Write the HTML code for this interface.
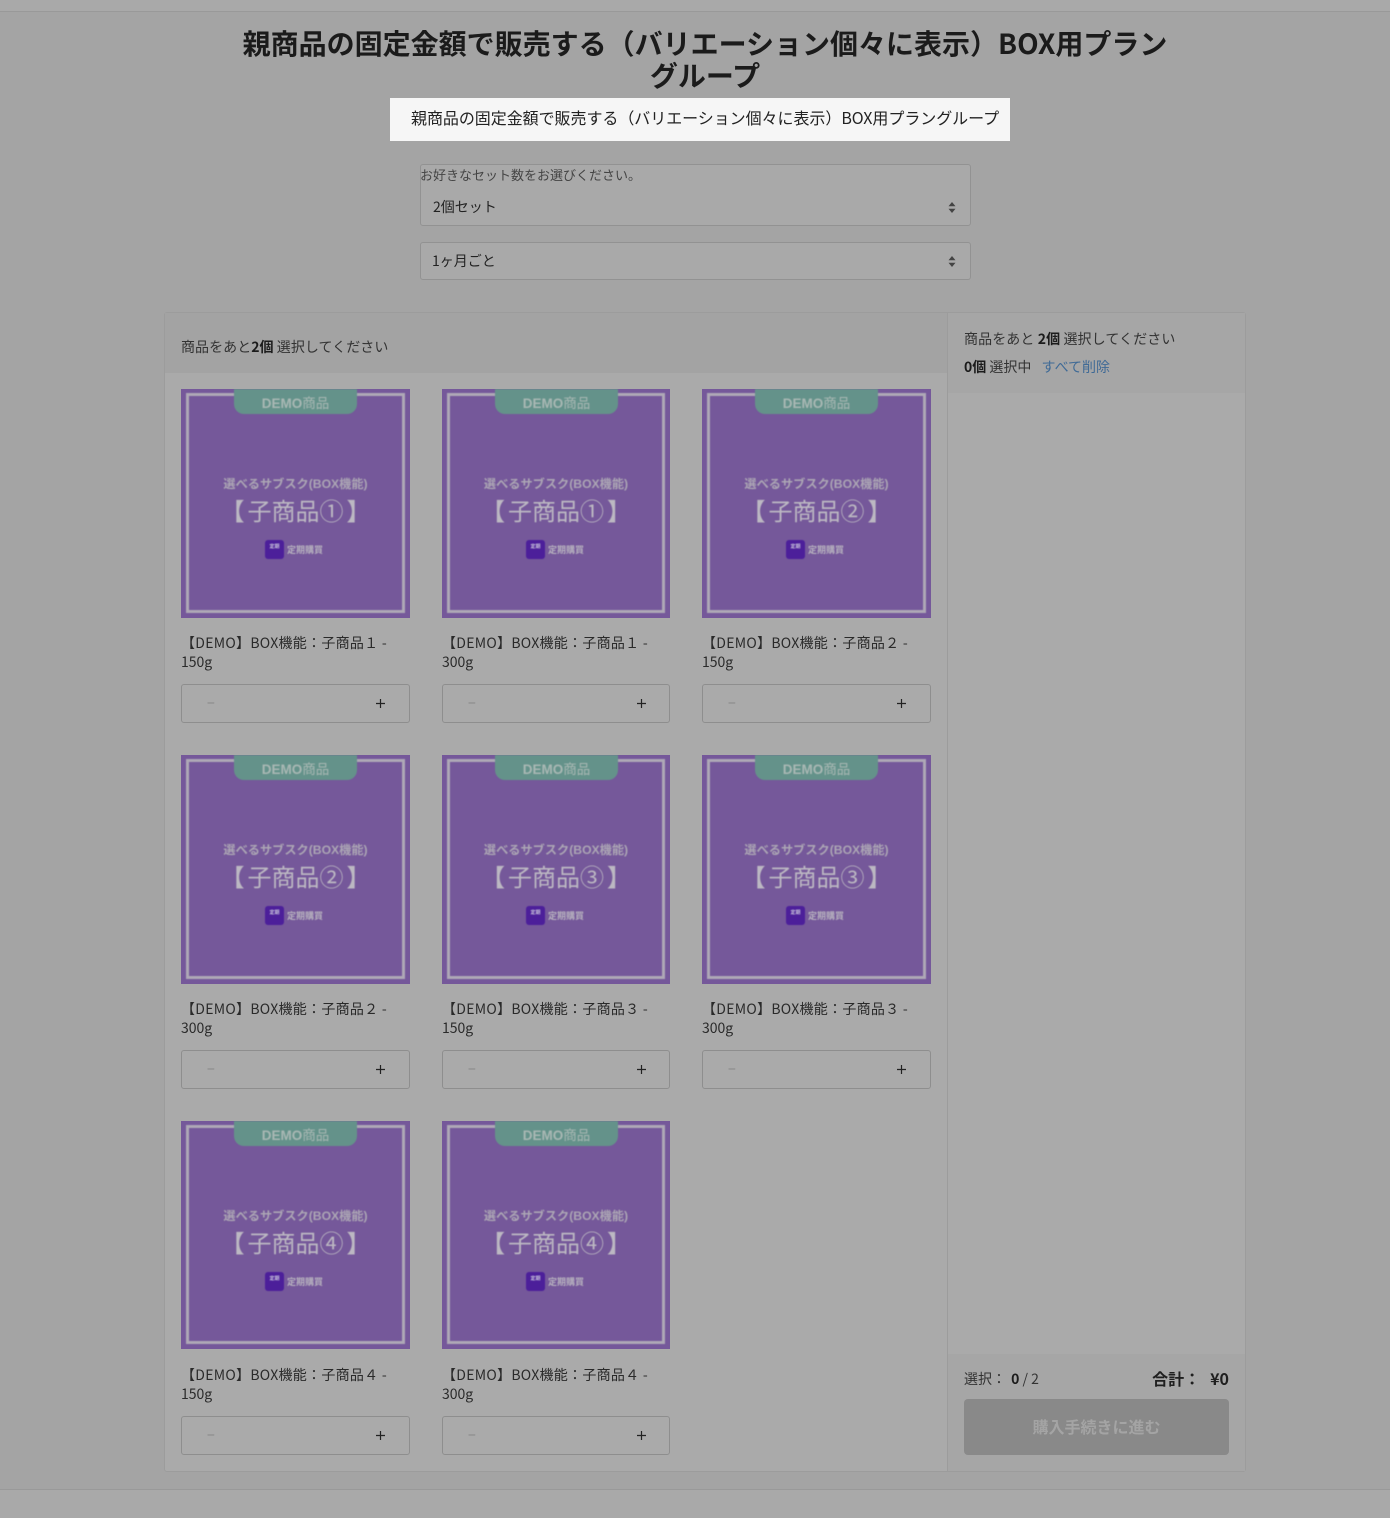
<!DOCTYPE html>
<html lang="ja"><head><meta charset="utf-8"><title>BOX</title>
<style>
*{box-sizing:border-box}
html,body{margin:0;padding:0}
body{width:1390px;height:1518px;position:relative;overflow:hidden;background:#a4a4a4;font-family:"Noto Sans CJK JP","Liberation Sans",sans-serif;color:#222;font-size:14px}
.a{position:absolute;white-space:nowrap}
.card{position:absolute;width:229px;height:334px}
.img{position:absolute;left:0;top:0;width:100%;height:229px;background:#75589a;overflow:hidden;font-family:"Liberation Sans","Noto Sans CJK JP",sans-serif}
.in{position:absolute;inset:0;filter:blur(.45px)}
.fr{position:absolute;left:5px;right:5px;top:4px;bottom:5px;border:3px solid #aea8b6}
.tag{position:absolute;left:53px;width:123px;top:0;height:25px;background:#64928a;border-radius:0 0 10px 10px;color:#a9b8b4;font-size:13.5px;font-weight:bold;text-align:center;line-height:29px}
.tag span{font-weight:normal}
.l1{position:absolute;left:0;right:0;top:87px;text-align:center;font-size:12.2px;font-weight:bold;color:#aca6b4;line-height:16px}
.l2{position:absolute;left:0;right:0;top:107px;text-align:center;font-size:24px;color:#bcb8c2;line-height:34px;white-space:nowrap}
.l2 b{margin:0 3px}
.ic{position:absolute;left:84px;top:151px;width:19px;height:19px;background:#4c1f9a;border-radius:3px;color:#c9c4dc;font-size:5px;text-align:center;line-height:15px;font-weight:bold;overflow:hidden;white-space:nowrap}
.l3{position:absolute;left:106px;top:154px;font-size:9px;font-weight:bold;color:#b8b3bf;line-height:15px;white-space:nowrap}
.nm{position:absolute;left:0;top:245px;width:100%;font-size:14px;line-height:19px;color:#2a2a2a}
.nm::first-line{letter-spacing:.28px}
.qty{position:absolute;left:0;right:0;top:295px;height:39px;border:1px solid #8e8e8e;border-radius:3px}
.qty .m{position:absolute;left:25px;top:9px;font-size:14px;color:#858585;line-height:18px}
.qty svg{position:absolute;left:193px;top:12.5px}
.sel{position:absolute;left:420px;width:551px;border:1px solid #929292;border-radius:3px;background:#a9a9a9}
.arr{position:absolute;left:948px;width:8px;height:11px}
</style></head>
<body>
<div class="a" style="left:0;top:0;width:1390px;height:12px;background:#a9a9a9;border-bottom:1px solid #999"></div>
<div class="a" style="left:0;top:1489px;width:1390px;height:29px;background:#a9a9a9;border-top:1px solid #999"></div>

<div class="a" style="left:225px;top:27px;width:960px;text-align:center;font-size:28px;line-height:32px;font-weight:bold;color:#1b1b1b">親商品の固定金額で販売する（バリエーション個々に表示）BOX用プラン<br>グループ</div>
<div class="a" style="left:390px;top:98px;width:620px;height:43px;background:#f6f6f6"></div>
<div class="a" style="left:411px;top:105px;font-size:16px;line-height:24px;color:#222;letter-spacing:-.05px">親商品の固定金額で販売する（バリエーション個々に表示）BOX用プラングループ</div>

<div class="sel" style="top:164px;height:62px"></div>
<div class="a" style="left:420px;top:166px;font-size:13px;line-height:18px;color:#444">お好きなセット数をお選びください。</div>
<div class="a" style="left:433px;top:197px;font-size:14px;line-height:20px;color:#222">2個セット</div>
<svg class="arr" style="top:202px" viewBox="0 0 8 11"><path d="M4 0 7.5 4.2H.5zM4 11 .5 6.8h7z" fill="#444"/></svg>
<div class="sel" style="top:242px;height:38px"></div>
<div class="a" style="left:432px;top:251px;font-size:14px;line-height:20px;color:#222">1ヶ月ごと</div>
<svg class="arr" style="top:256px" viewBox="0 0 8 11"><path d="M4 0 7.5 4.2H.5zM4 11 .5 6.8h7z" fill="#444"/></svg>

<div class="a" style="left:164px;top:312px;width:1082px;height:1160px;background:#aaa;border:1px solid #9c9c9c;border-radius:3px"></div>
<div class="a" style="left:165px;top:313px;width:782px;height:60px;background:#a3a3a3"></div>
<div class="a" style="left:947px;top:313px;width:1px;height:1158px;background:#9c9c9c"></div>
<div class="a" style="left:948px;top:313px;width:297px;height:80px;background:#a6a6a6"></div>
<div class="a" style="left:948px;top:1354px;width:297px;height:117px;background:#a6a6a6"></div>

<div class="a" style="left:181px;top:337px;font-size:14px;line-height:20px;color:#333;letter-spacing:.05px">商品をあと<b style="color:#1c1c1c">2個</b> 選択してください</div>
<div class="a" style="left:964px;top:329px;font-size:14px;line-height:20px;color:#333;letter-spacing:.1px">商品をあと <b style="color:#1c1c1c">2個</b> 選択してください</div>
<div class="a" style="left:964px;top:357px;font-size:14px;line-height:20px;color:#333"><b style="color:#1c1c1c">0個</b> 選択中 <span style="color:#3f6a96;margin-left:7px">すべて削除</span></div>

<div class="card" style="left:181px;top:389px"><div class="img"><div class="in"><div class="fr"></div><div class="tag">DEMO<span>商品</span></div><div class="l1">選べるサブスク(BOX機能)</div><div class="l2"><b>【</b>子商品①<b>】</b></div><div class="ic">定期</div><div class="l3">定期購買</div></div></div><div class="nm">【DEMO】BOX機能：子商品１ -<br>150g</div><div class="qty"><span class="m">−</span><svg width="11" height="11" viewBox="0 0 11 11"><path d="M5.5 1v9M1 5.5h9" stroke="#222" stroke-width="1.2"/></svg></div></div>

<div class="card" style="left:442px;top:389px;width:228px"><div class="img"><div class="in"><div class="fr"></div><div class="tag">DEMO<span>商品</span></div><div class="l1">選べるサブスク(BOX機能)</div><div class="l2"><b>【</b>子商品①<b>】</b></div><div class="ic">定期</div><div class="l3">定期購買</div></div></div><div class="nm">【DEMO】BOX機能：子商品１ -<br>300g</div><div class="qty"><span class="m">−</span><svg width="11" height="11" viewBox="0 0 11 11"><path d="M5.5 1v9M1 5.5h9" stroke="#222" stroke-width="1.2"/></svg></div></div>

<div class="card" style="left:702px;top:389px"><div class="img"><div class="in"><div class="fr"></div><div class="tag">DEMO<span>商品</span></div><div class="l1">選べるサブスク(BOX機能)</div><div class="l2"><b>【</b>子商品②<b>】</b></div><div class="ic">定期</div><div class="l3">定期購買</div></div></div><div class="nm">【DEMO】BOX機能：子商品２ -<br>150g</div><div class="qty"><span class="m">−</span><svg width="11" height="11" viewBox="0 0 11 11"><path d="M5.5 1v9M1 5.5h9" stroke="#222" stroke-width="1.2"/></svg></div></div>

<div class="card" style="left:181px;top:755px"><div class="img"><div class="in"><div class="fr"></div><div class="tag">DEMO<span>商品</span></div><div class="l1">選べるサブスク(BOX機能)</div><div class="l2"><b>【</b>子商品②<b>】</b></div><div class="ic">定期</div><div class="l3">定期購買</div></div></div><div class="nm">【DEMO】BOX機能：子商品２ -<br>300g</div><div class="qty"><span class="m">−</span><svg width="11" height="11" viewBox="0 0 11 11"><path d="M5.5 1v9M1 5.5h9" stroke="#222" stroke-width="1.2"/></svg></div></div>

<div class="card" style="left:442px;top:755px;width:228px"><div class="img"><div class="in"><div class="fr"></div><div class="tag">DEMO<span>商品</span></div><div class="l1">選べるサブスク(BOX機能)</div><div class="l2"><b>【</b>子商品③<b>】</b></div><div class="ic">定期</div><div class="l3">定期購買</div></div></div><div class="nm">【DEMO】BOX機能：子商品３ -<br>150g</div><div class="qty"><span class="m">−</span><svg width="11" height="11" viewBox="0 0 11 11"><path d="M5.5 1v9M1 5.5h9" stroke="#222" stroke-width="1.2"/></svg></div></div>

<div class="card" style="left:702px;top:755px"><div class="img"><div class="in"><div class="fr"></div><div class="tag">DEMO<span>商品</span></div><div class="l1">選べるサブスク(BOX機能)</div><div class="l2"><b>【</b>子商品③<b>】</b></div><div class="ic">定期</div><div class="l3">定期購買</div></div></div><div class="nm">【DEMO】BOX機能：子商品３ -<br>300g</div><div class="qty"><span class="m">−</span><svg width="11" height="11" viewBox="0 0 11 11"><path d="M5.5 1v9M1 5.5h9" stroke="#222" stroke-width="1.2"/></svg></div></div>

<div class="card" style="left:181px;top:1121px"><div class="img" style="height:228px"><div class="in"><div class="fr"></div><div class="tag">DEMO<span>商品</span></div><div class="l1">選べるサブスク(BOX機能)</div><div class="l2"><b>【</b>子商品④<b>】</b></div><div class="ic">定期</div><div class="l3">定期購買</div></div></div><div class="nm">【DEMO】BOX機能：子商品４ -<br>150g</div><div class="qty"><span class="m">−</span><svg width="11" height="11" viewBox="0 0 11 11"><path d="M5.5 1v9M1 5.5h9" stroke="#222" stroke-width="1.2"/></svg></div></div>

<div class="card" style="left:442px;top:1121px;width:228px"><div class="img" style="height:228px"><div class="in"><div class="fr"></div><div class="tag">DEMO<span>商品</span></div><div class="l1">選べるサブスク(BOX機能)</div><div class="l2"><b>【</b>子商品④<b>】</b></div><div class="ic">定期</div><div class="l3">定期購買</div></div></div><div class="nm">【DEMO】BOX機能：子商品４ -<br>300g</div><div class="qty"><span class="m">−</span><svg width="11" height="11" viewBox="0 0 11 11"><path d="M5.5 1v9M1 5.5h9" stroke="#222" stroke-width="1.2"/></svg></div></div>

<div class="a" style="left:964px;top:1369px;font-size:14px;line-height:20px;color:#333">選択： <b style="color:#1c1c1c;margin-left:2px">0</b> / 2</div>
<div class="a" style="left:1029px;width:200px;text-align:right;top:1367px;font-size:16px;line-height:22px;font-weight:bold;color:#1f1f1f">合計：<span style="margin-left:10px">¥0</span></div>
<div class="a" style="left:964px;top:1399px;width:265px;height:56px;background:#898989;border-radius:4px;text-align:center;font-size:16px;font-weight:bold;line-height:54px;color:#a4a4a4">購入手続きに進む</div>
</body></html>
